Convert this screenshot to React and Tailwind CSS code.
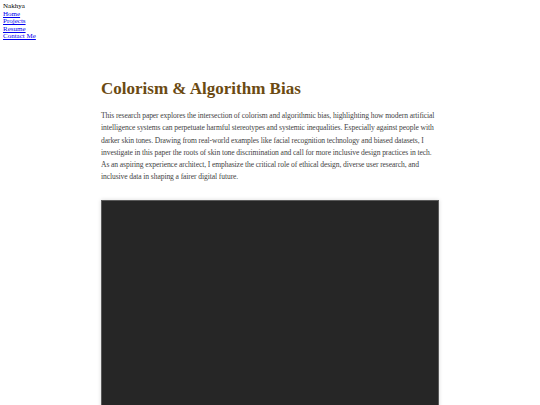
import React from 'react';

const links = ['Home', 'Projects', 'Resume', 'Contact Me'];

const App = () => {
  return (
    <div className="min-h-screen bg-white font-['Liberation_Serif',serif]">
      <nav className="pl-[3px] pt-[3px] text-[7px] leading-[7.6px] text-black">
        <div>Nakhya</div>
        {links.map((l) => (
          <div key={l}>
            <a href="#" className="text-[#0000ee] underline">
              {l}
            </a>
          </div>
        ))}
      </nav>

      <main className="mx-auto mt-[38px] w-[338px]">
        <h1 className="text-[17px] leading-[20px] font-bold text-[#6b4a12]">
          Colorism &amp; Algorithm Bias
        </h1>
        <p className="mt-[11px] text-[7.6px] leading-[12.3px] tracking-[-0.1px] text-[#444444]">
          This research paper explores the intersection of colorism and algorithmic bias, highlighting how modern artificial
          intelligence systems can perpetuate harmful stereotypes and systemic inequalities. Especially against people with
          darker skin tones. Drawing from real-world examples like facial recognition technology and biased datasets, I
          investigate in this paper the roots of skin tone discrimination and call for more inclusive design practices in tech.
          As an aspiring experience architect, I emphasize the critical role of ethical design, diverse user research, and
          inclusive data in shaping a fairer digital future.
        </p>
        <div className="mt-[16px] h-[260px] border border-[#5a5a5a] bg-[#262626] shadow-[0_0_4px_rgba(0,0,0,0.15)]" />
      </main>
    </div>
  );
};

export default App;
